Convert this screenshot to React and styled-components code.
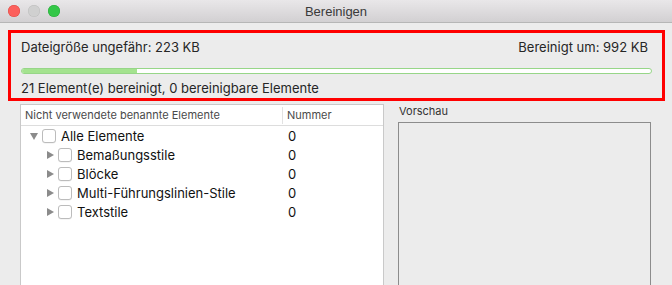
import React from "react";
import styled, { createGlobalStyle } from "styled-components";

const GlobalStyle = createGlobalStyle`
  html, body {
    margin: 0;
    padding: 0;
    background: #ececec;
    overflow: hidden;
  }
  body {
    font-family: Inter, "Liberation Sans", Arial, sans-serif;
    color: #262626;
  }
`;

const Window = styled.div`
  width: 672px;
  height: 285px;
  display: flex;
  flex-direction: column;
  background: #ececec;
  overflow: hidden;
`;

const TitleBar = styled.div`
  height: 22px;
  flex: none;
  display: grid;
  grid-template-columns: 1fr auto 1fr;
  align-items: center;
  background: linear-gradient(#e9e7e9, #d2d0d2);
  border-bottom: 1px solid #b6b6b6;
`;

const Lights = styled.div`
  display: flex;
  gap: 8px;
  padding-left: 8px;
`;

const Light = styled.span`
  width: 12px;
  height: 12px;
  border-radius: 50%;
  background: ${(p) => p.color};
  box-shadow: inset 0 0 0 0.5px ${(p) => p.edge};
`;

const Title = styled.div`
  font-family: "Liberation Sans", Arial, sans-serif;
  font-size: 13px;
  color: #3a3a3a;
`;

const Content = styled.div`
  flex: 1;
  display: flex;
  flex-direction: column;
  padding: 7px 7px 0 8px;
  min-height: 0;
`;

const Summary = styled.section`
  border: 3px solid #ff0000;
  padding: 6px 10px 2px 10px;
  display: flex;
  flex-direction: column;
`;

const InfoRow = styled.div`
  display: flex;
  justify-content: space-between;
  font-size: 13px;
  line-height: 16px;
  padding-right: 4px;
`;

const Progress = styled.div`
  margin-top: 13px;
  height: 6px;
  border: 1px solid #97d688;
  border-radius: 4px;
  background: #ffffff;
  box-sizing: border-box;
  overflow: hidden;
`;

const ProgressFill = styled.div`
  height: 100%;
  background: #a4e38f;
`;

const Status = styled.div`
  margin-top: 6px;
  font-size: 13px;
  line-height: 16px;
`;

const Lower = styled.div`
  flex: 1;
  display: flex;
  gap: 14px;
  margin-top: 3px;
  padding-left: 12px;
  min-height: 0;
`;

const TreePanel = styled.div`
  width: 364px;
  box-sizing: border-box;
  background: #ffffff;
  border: 1px solid #c9c9c9;
  border-bottom: none;
  display: flex;
  flex-direction: column;
`;

const TreeHeader = styled.div`
  display: grid;
  grid-template-columns: 262px 1fr;
  height: 20px;
  border-bottom: 1px solid #dddddd;
  font-size: 11px;
  color: #4a4a4a;
  align-items: center;
`;

const HeaderCell = styled.div`
  padding-left: 4px;
  height: 17px;
  line-height: 17px;
  border-right: ${(p) => (p.first ? "1px solid #e2e2e2" : "none")};
`;

const Row = styled.div`
  display: grid;
  grid-template-columns: 262px 1fr;
  height: 19px;
  align-items: center;
  font-size: 13px;
  color: #111;
`;

const NameCell = styled.div`
  display: flex;
  align-items: center;
  padding-left: ${(p) => 9 + p.level * 16}px;
`;

const Disclosure = styled.span`
  width: 8px;
  height: 8px;
  display: flex;
  align-items: center;
  justify-content: center;
  margin-right: 4px;
`;

const Checkbox = styled.span`
  width: 12px;
  height: 12px;
  border: 1px solid #bcbcbc;
  border-radius: 3px;
  background: #fff;
  box-shadow: 0 0.5px 0.5px rgba(0, 0, 0, 0.08);
  margin-right: 5px;
  flex: none;
`;

const NumCell = styled.div`
  padding-left: 5px;
`;

const PreviewColumn = styled.div`
  width: 253px;
  display: flex;
  flex-direction: column;
`;

const PreviewLabel = styled.div`
  font-size: 11px;
  color: #333;
  line-height: 14px;
  padding-left: 1px;
`;

const PreviewBox = styled.div`
  flex: 1;
  margin-top: 4px;
  border: 1px solid #8c8c8c;
  border-bottom: none;
  background: #ececec;
`;

function Triangle({ open }) {
  return (
    <svg width="8" height="8" viewBox="0 0 8 8">
      {open ? (
        <polygon points="0,1 8,1 4,8" fill="#8b8b8b" />
      ) : (
        <polygon points="1,0 8,4 1,8" fill="#8b8b8b" />
      )}
    </svg>
  );
}

const items = [
  { name: "Alle Elemente", level: 0, open: true, count: 0 },
  { name: "Bemaßungsstile", level: 1, count: 0 },
  { name: "Blöcke", level: 1, count: 0 },
  { name: "Multi-Führungslinien-Stile", level: 1, count: 0 },
  { name: "Textstile", level: 1, count: 0 },
];

export default function App() {
  const progress = 116 / 632;
  return (
    <>
      <GlobalStyle />
      <Window>
        <TitleBar>
          <Lights>
            <Light color="#fc605c" edge="#de4a45" />
            <Light color="#d0d0d0" edge="#bdbdbd" />
            <Light color="#34c748" edge="#29a93a" />
          </Lights>
          <Title>Bereinigen</Title>
          <div />
        </TitleBar>
        <Content>
          <Summary>
            <InfoRow>
              <span>Dateigröße ungefähr: 223 KB</span>
              <span>Bereinigt um: 992 KB</span>
            </InfoRow>
            <Progress>
              <ProgressFill style={{ width: `${progress * 100}%` }} />
            </Progress>
            <Status>21 Element(e) bereinigt, 0 bereinigbare Elemente</Status>
          </Summary>
          <Lower>
            <TreePanel>
              <TreeHeader>
                <HeaderCell first>Nicht verwendete benannte Elemente</HeaderCell>
                <HeaderCell>Nummer</HeaderCell>
              </TreeHeader>
              {items.map((it) => (
                <Row key={it.name}>
                  <NameCell level={it.level}>
                    <Disclosure>
                      <Triangle open={it.open} />
                    </Disclosure>
                    <Checkbox />
                    <span>{it.name}</span>
                  </NameCell>
                  <NumCell>{it.count}</NumCell>
                </Row>
              ))}
            </TreePanel>
            <PreviewColumn>
              <PreviewLabel>Vorschau</PreviewLabel>
              <PreviewBox />
            </PreviewColumn>
          </Lower>
        </Content>
      </Window>
    </>
  );
}
